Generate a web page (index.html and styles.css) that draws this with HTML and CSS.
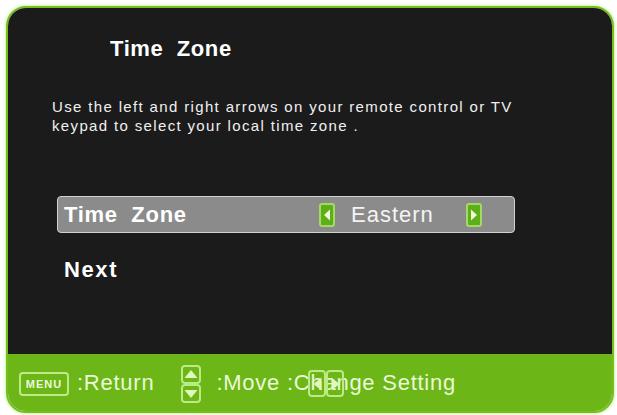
FILE: index.html
```html
<!DOCTYPE html>
<html>
<head>
<meta charset="utf-8">
<link rel="stylesheet" href="styles.css">
</head>
<body>
<div class="frame">
  <div class="panel">
    <h1 class="title">Time&nbsp; Zone</h1>
    <p class="help">Use the left and right arrows on your remote control or TV<br>keypad to select your local time zone .</p>
    <div class="menu">
      <div class="row selected">
        <span class="label">Time&nbsp; Zone</span>
        <span class="value">
          <span class="arrow-btn"><svg width="8" height="14" viewBox="0 0 8 14"><polygon points="7,1.5 1,7 7,12.5" fill="#eefad8"/></svg></span>
          <span class="value-text">Eastern</span>
          <span class="arrow-btn"><svg width="8" height="14" viewBox="0 0 8 14"><polygon points="1,1.5 7,7 1,12.5" fill="#eefad8"/></svg></span>
        </span>
      </div>
      <div class="row next">Next</div>
    </div>
  </div>
  <div class="footer">
    <span class="key-menu">MENU</span>
    <span class="hint hint-return">:Return</span>
    <span class="key-updown">
      <span class="kbox"><svg width="14" height="11" viewBox="0 0 14 11"><polygon points="7,1 13.5,9 0.5,9" fill="#e0f8bc"/></svg></span>
      <span class="kbox"><svg width="14" height="11" viewBox="0 0 14 11"><polygon points="0.5,2 13.5,2 7,10" fill="#e0f8bc"/></svg></span>
    </span>
    <span class="hint hint-move">:Move :Change Setting</span>
    <span class="key-leftright">
      <span class="hbox"><svg width="11" height="16" viewBox="0 0 11 16"><polygon points="9.5,1.5 1.5,8 9.5,14.5" fill="#e0f8bc"/></svg></span>
      <span class="hbox"><svg width="11" height="16" viewBox="0 0 11 16"><polygon points="1.5,1.5 9.5,8 1.5,14.5" fill="#e0f8bc"/></svg></span>
    </span>
  </div>
</div>
</body>
</html>
```

FILE: styles.css
```css
html, body {
  margin: 0;
  padding: 0;
  background: #ffffff;
}
body {
  font-family: "Liberation Sans", Arial, sans-serif;
  width: 617px;
  height: 415px;
  overflow: hidden;
}
.frame {
  margin: 6px 0 0 6px;
  width: 604px;
  height: 403px;
  border: 2px solid #72bf1e;
  border-radius: 20px;
  box-shadow: 0 0 3px 1px #d3f3a6;
  overflow: hidden;
  display: flex;
  flex-direction: column;
  position: relative;
}
.panel {
  flex: 1;
  background: #1b1b1b;
  padding: 0 0 0 44px;
  color: #ffffff;
}
.title {
  margin: 28px 0 0 58px;
  font-size: 22px;
  line-height: 26px;
  font-weight: bold;
  letter-spacing: 0.6px;
}
.help {
  margin: 35px 0 0 0;
  font-size: 15px;
  line-height: 19px;
  letter-spacing: 1.35px;
  color: #f0f0f0;
}
.menu {
  margin-top: 61px;
  width: 458px;
  margin-left: 5px;
}
.row {
  display: flex;
  align-items: center;
  font-size: 22px;
  font-weight: bold;
}
.selected {
  background: #8b8b8b;
  border: 1px solid #d2d2d2;
  border-radius: 4px;
  padding-left: 6px;
  box-sizing: border-box;
  height: 37px;
}
.label {
  flex: 1;
  letter-spacing: 0.7px;
}
.value {
  display: flex;
  align-items: center;
  margin-right: 32px;
}
.value-text {
  font-weight: normal;
  font-size: 22px;
  width: 131px;
  box-sizing: border-box;
  padding-left: 16px;
  letter-spacing: 1px;
  color: #f4f4f4;
}
.arrow-btn {
  width: 16px;
  height: 24px;
  border-radius: 3px;
  background: #5dae17;
  border: 2px solid #a3d964;
  box-sizing: border-box;
  display: flex;
  align-items: center;
  justify-content: center;
}
.next {
  margin-top: 18px;
  padding-left: 7px;
  height: 37px;
  letter-spacing: 1.6px;
}
.footer {
  height: 57px;
  background: #6cb617;
  display: flex;
  align-items: center;
  padding: 0 0 0 11px;
  color: #eaf9d6;
}
.key-menu {
  width: 50px;
  height: 24px;
  box-sizing: border-box;
  border: 2px solid #bdea84;
  border-radius: 4px;
  font-size: 11px;
  font-weight: bold;
  display: flex;
  align-items: center;
  justify-content: center;
  color: #eefadc;
  letter-spacing: 1px;
  margin-top: 2px;
}
.hint {
  font-size: 22px;
  letter-spacing: 0.75px;
}
.hint-return {
  margin-left: 8px;
}
.key-updown {
  margin-left: 27px;
  margin-top: 3px;
  display: flex;
  flex-direction: column;
}
.kbox {
  width: 20px;
  height: 19px;
  box-sizing: border-box;
  border: 2px solid #bdea84;
  border-radius: 4px;
  display: flex;
  align-items: center;
  justify-content: center;
}
.hint-move {
  margin-left: 15px;
}
.key-leftright {
  position: absolute;
  left: 300px;
  top: 362px;
  display: flex;
}
.hbox {
  width: 18px;
  height: 27px;
  box-sizing: border-box;
  border: 2px solid #bdea84;
  border-radius: 4px;
  display: flex;
  align-items: center;
  justify-content: center;
}
```
